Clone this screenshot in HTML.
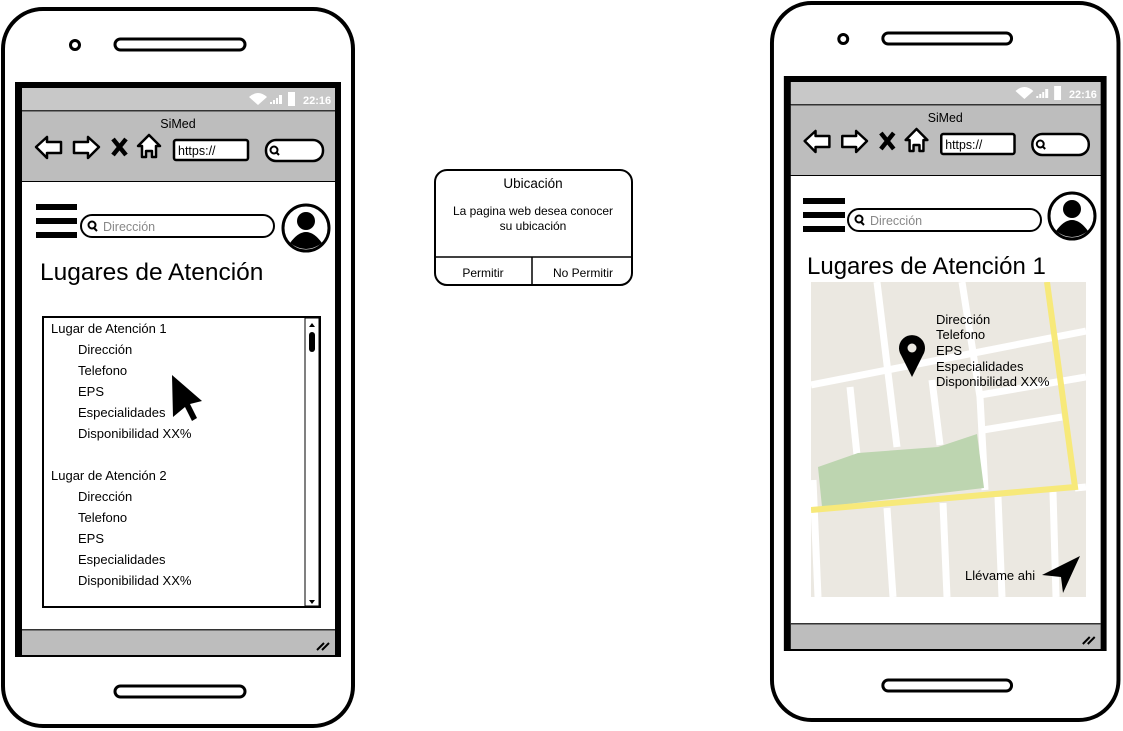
<!DOCTYPE html>
<html><head><meta charset="utf-8"><style>
html,body{margin:0;padding:0;background:#fff;}
svg{display:block;font-family:"Liberation Sans",sans-serif;}
</style></head><body>
<svg width="1123" height="731" viewBox="0 0 1123 731" xmlns="http://www.w3.org/2000/svg">
<defs>
<g id="frame">
  <rect x="3" y="9" width="350" height="717" rx="40" fill="#fff" stroke="#000" stroke-width="4"/>
  <circle cx="75" cy="45" r="4.5" fill="none" stroke="#000" stroke-width="3"/>
  <rect x="115" y="39" width="130" height="11" rx="5.5" fill="none" stroke="#000" stroke-width="3"/>
  <rect x="115" y="686" width="130" height="11" rx="5.5" fill="none" stroke="#000" stroke-width="3"/>
  <rect x="15" y="82" width="326" height="575" fill="#000"/>
  <rect x="22" y="88" width="313" height="22" fill="#c8c8c8"/>
  <rect x="22" y="111" width="313" height="70" fill="#bdbdbd"/>
  <rect x="22" y="110" width="313" height="1.5" fill="#333"/>
  <rect x="22" y="182" width="313" height="448" fill="#fff"/>
  <rect x="22" y="630" width="313" height="25" fill="#bdbdbd"/>
  <rect x="22" y="629" width="313" height="1.5" fill="#333"/>
  <path d="M249 97 q9 -8 18 0 l-9 8z" fill="#fff"/>
  <path d="M270 104h2v-2h-2zM273 104h2v-4h-2zM276 104h2v-6h-2zM279 104h3v-9h-3z" fill="#fff"/>
  <rect x="288" y="92" width="7" height="14" fill="#fff"/>
  <text x="303" y="104" font-size="11" font-weight="bold" fill="#fff">22:16</text>
  <text x="178" y="128" font-size="12.5" text-anchor="middle">SiMed</text>
  <path d="M36 147 l11 -10 v5 h14 v11 h-14 v5z" fill="#fff" stroke="#000" stroke-width="2.5" stroke-linejoin="round"/>
  <path d="M99 147 l-11 -10 v5 h-14 v11 h14 v5z" fill="#fff" stroke="#000" stroke-width="2.5" stroke-linejoin="round"/>
  <path d="M113 139 l13 16 M126 139 l-13 16" stroke="#000" stroke-width="4.5"/>
  <path d="M149 135 l-11 11 h4 v11 h4 v-6 h6 v6 h4 v-11 h4z" fill="#fff" stroke="#000" stroke-width="2.5" stroke-linejoin="round"/>
  <rect x="174" y="140" width="74" height="20" rx="2" fill="#fff" stroke="#000" stroke-width="2.5"/>
  <text x="178" y="155" font-size="12.5">https://</text>
  <rect x="266" y="140" width="57" height="21" rx="10" fill="#fff" stroke="#000" stroke-width="2.5"/>
  <circle cx="274" cy="150" r="3.5" fill="none" stroke="#000" stroke-width="2"/>
  <path d="M276 152 l3 3" stroke="#000" stroke-width="2"/>
  <path d="M317 650 l7 -7 M322 650 l7 -7" stroke="#000" stroke-width="2"/>
</g>
</defs>

<use href="#frame"/>
<use href="#frame" transform="translate(769,-6) scale(0.99,1)"/>

<!-- LEFT content -->
<rect x="36" y="204" width="41" height="6" fill="#000"/>
<rect x="36" y="218" width="41" height="6" fill="#000"/>
<rect x="36" y="232" width="41" height="6" fill="#000"/>
<rect x="81" y="215" width="193" height="22" rx="11" fill="#fff" stroke="#000" stroke-width="2"/>
<circle cx="92" cy="225" r="3.5" fill="none" stroke="#000" stroke-width="2"/>
<path d="M94 228 l3 3" stroke="#000" stroke-width="2"/>
<text x="103" y="231" font-size="12.5" fill="#888">Dirección</text>
<circle cx="306" cy="228" r="23" fill="#fff" stroke="#000" stroke-width="3"/>
<circle cx="306" cy="221" r="9" fill="#000"/>
<path d="M290 243 q16 -22 32 0 q-16 12 -32 0z" fill="#000"/>
<text x="40" y="280" font-size="24.5">Lugares de Atención</text>

<rect x="43" y="317" width="277" height="290" fill="#fff" stroke="#000" stroke-width="2"/>
<rect x="305" y="318" width="14" height="288" fill="#fff" stroke="#000" stroke-width="1"/>
<path d="M309 327 l3 -4 l3 4z M309 600 l3 4 l3 -4z" fill="#000"/>
<rect x="309" y="332" width="6" height="20" rx="3" fill="#000"/>
<g font-size="13">
<text x="51" y="333">Lugar de Atención 1</text>
<text x="78" y="354">Dirección</text>
<text x="78" y="375">Telefono</text>
<text x="78" y="396">EPS</text>
<text x="78" y="417">Especialidades</text>
<text x="78" y="438">Disponibilidad XX%</text>
<text x="51" y="480">Lugar de Atención 2</text>
<text x="78" y="501">Dirección</text>
<text x="78" y="522">Telefono</text>
<text x="78" y="543">EPS</text>
<text x="78" y="564">Especialidades</text>
<text x="78" y="585">Disponibilidad XX%</text>
</g>
<path d="M172 375 L202 401 L190 404 L197 418 L192 421 L185 407 L173 417 Z" fill="#000"/>

<!-- POPUP -->
<rect x="435" y="170" width="197" height="115" rx="12" fill="#fff" stroke="#000" stroke-width="2"/>
<path d="M435 257 H632 M532 257 V285" stroke="#000" stroke-width="1.5"/>
<text x="533" y="188" font-size="13.5" text-anchor="middle">Ubicación</text>
<text x="533" y="215" font-size="12" text-anchor="middle">La pagina web desea conocer</text>
<text x="533" y="230" font-size="12" text-anchor="middle">su ubicación</text>
<text x="483" y="277" font-size="12" text-anchor="middle">Permitir</text>
<text x="583" y="277" font-size="12" text-anchor="middle">No Permitir</text>

<!-- RIGHT content -->
<rect x="803" y="198" width="42" height="6" fill="#000"/>
<rect x="803" y="212" width="42" height="6" fill="#000"/>
<rect x="803" y="226" width="42" height="6" fill="#000"/>
<rect x="848" y="209" width="193" height="22" rx="11" fill="#fff" stroke="#000" stroke-width="2"/>
<circle cx="859" cy="219" r="3.5" fill="none" stroke="#000" stroke-width="2"/>
<path d="M861 222 l3 3" stroke="#000" stroke-width="2"/>
<text x="870" y="225" font-size="12.5" fill="#888">Dirección</text>
<circle cx="1072" cy="216" r="23" fill="#fff" stroke="#000" stroke-width="3"/>
<circle cx="1072" cy="209" r="9" fill="#000"/>
<path d="M1056 231 q16 -22 32 0 q-16 12 -32 0z" fill="#000"/>
<text x="807" y="274" font-size="24">Lugares de Atención 1</text>

<svg x="811" y="282" width="275" height="315" viewBox="811 282 275 315">
<rect x="811" y="282" width="275" height="315" fill="#ebe8e1"/>
<g stroke="#fff" stroke-width="7" fill="none">
 <path d="M811 385 L1086 331"/>
 <path d="M980 395 L1086 377"/>
 <path d="M983 430 L1062 417"/>
 <path d="M877 282 L897 447"/>
 <path d="M962 282 L980 397 L985 490"/>
 <path d="M850 387 L857 455"/>
 <path d="M932 380 L940 445"/>
 <path d="M887 508 L893 597 M943 503 L947 597 M998 497 L1002 597 M1053 492 L1056 597"/>
 <path d="M813 480 L818 597"/>
 <path d="M1075 488 L1086 487"/>
</g>
<path d="M818 467 L858 453 L938 447 L977 434 L984 488 L822 507Z" fill="#bdd5b0"/>
<path d="M811 510 L1075 487 L1047 282" fill="none" stroke="#f7e97a" stroke-width="6"/>
</svg>
<path d="M912 377 L901 355 A13 13 0 1 1 923 355 Z" fill="#000"/>
<circle cx="912" cy="348" r="4.5" fill="#ebe8e1"/>
<g font-size="13">
<text x="936" y="324">Dirección</text>
<text x="936" y="339">Telefono</text>
<text x="936" y="355">EPS</text>
<text x="936" y="371">Especialidades</text>
<text x="936" y="386">Disponibilidad XX%</text>
<text x="965" y="580">Llévame ahi</text>
</g>
<path d="M1042 575 L1080 556 L1063 593 L1061 577 Z" fill="#000"/>
</svg>
</body></html>
